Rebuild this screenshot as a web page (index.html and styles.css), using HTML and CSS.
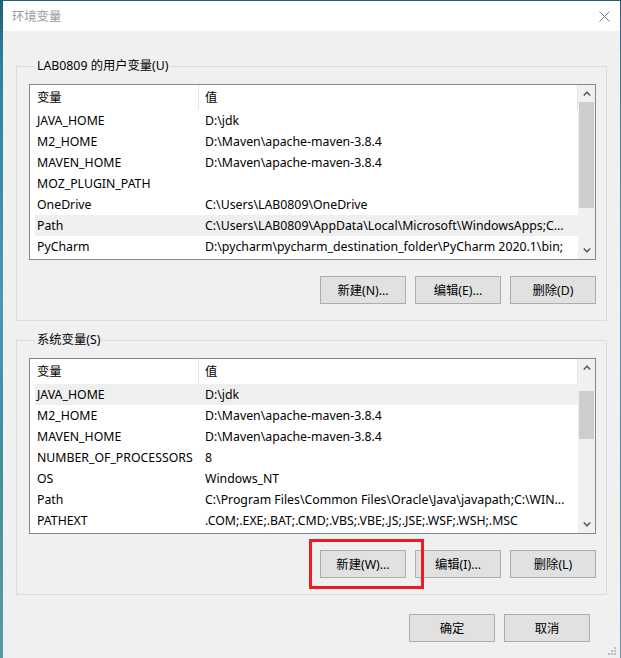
FILE: index.html
```html
<!DOCTYPE html>
<html lang="zh-CN">
<head>
  <meta charset="UTF-8">
  <title>环境变量</title>
  <link rel="stylesheet" href="styles.css">
</head>
<body>
  <div class="window">
    <div class="titlebar">
      <span class="title">环境变量</span>
      <svg class="close" width="11" height="11" viewBox="0 0 11 11">
        <path d="M0.5 0.5 L10.5 10.5 M10.5 0.5 L0.5 10.5" stroke="#7a7a7a" stroke-width="1" fill="none"/>
      </svg>
    </div>

    <div class="content">
      <fieldset class="group">
        <legend>LAB0809 的用户变量(U)</legend>
        <div class="listview">
          <div class="list-main">
            <div class="list-header">
              <div class="hcell name">变量</div>
              <div class="hcell value">值</div>
            </div>
            <div class="row"><span class="c1">JAVA_HOME</span><span class="c2">D:\jdk</span></div>
            <div class="row"><span class="c1">M2_HOME</span><span class="c2">D:\Maven\apache-maven-3.8.4</span></div>
            <div class="row"><span class="c1">MAVEN_HOME</span><span class="c2">D:\Maven\apache-maven-3.8.4</span></div>
            <div class="row"><span class="c1">MOZ_PLUGIN_PATH</span><span class="c2"></span></div>
            <div class="row"><span class="c1">OneDrive</span><span class="c2">C:\Users\LAB0809\OneDrive</span></div>
            <div class="row selected"><span class="c1">Path</span><span class="c2">C:\Users\LAB0809\AppData\Local\Microsoft\WindowsApps;C...</span></div>
            <div class="row"><span class="c1">PyCharm</span><span class="c2">D:\pycharm\pycharm_destination_folder\PyCharm 2020.1\bin;</span></div>
          </div>
          <div class="scrollbar">
            <div class="arrow"><svg width="8" height="5" viewBox="0 0 8 5"><path d="M0.8 4.5 L4 1.2 L7.2 4.5" stroke="#606060" stroke-width="1.6" fill="none"/></svg></div>
            <div class="track"><div class="thumb thumb-user"></div></div>
            <div class="arrow"><svg width="8" height="5" viewBox="0 0 8 5"><path d="M0.8 0.5 L4 3.8 L7.2 0.5" stroke="#606060" stroke-width="1.6" fill="none"/></svg></div>
          </div>
        </div>
        <div class="buttons">
          <button class="btn">新建(N)...</button>
          <button class="btn">编辑(E)...</button>
          <button class="btn">删除(D)</button>
        </div>
      </fieldset>

      <fieldset class="group system">
        <legend>系统变量(S)</legend>
        <div class="listview">
          <div class="list-main">
            <div class="list-header">
              <div class="hcell name">变量</div>
              <div class="hcell value">值</div>
            </div>
            <div class="row selected"><span class="c1">JAVA_HOME</span><span class="c2">D:\jdk</span></div>
            <div class="row"><span class="c1">M2_HOME</span><span class="c2">D:\Maven\apache-maven-3.8.4</span></div>
            <div class="row"><span class="c1">MAVEN_HOME</span><span class="c2">D:\Maven\apache-maven-3.8.4</span></div>
            <div class="row"><span class="c1">NUMBER_OF_PROCESSORS</span><span class="c2">8</span></div>
            <div class="row"><span class="c1">OS</span><span class="c2">Windows_NT</span></div>
            <div class="row"><span class="c1">Path</span><span class="c2">C:\Program Files\Common Files\Oracle\Java\javapath;C:\WIN...</span></div>
            <div class="row"><span class="c1">PATHEXT</span><span class="c2">.COM;.EXE;.BAT;.CMD;.VBS;.VBE;.JS;.JSE;.WSF;.WSH;.MSC</span></div>
          </div>
          <div class="scrollbar">
            <div class="arrow"><svg width="8" height="5" viewBox="0 0 8 5"><path d="M0.8 4.5 L4 1.2 L7.2 4.5" stroke="#606060" stroke-width="1.6" fill="none"/></svg></div>
            <div class="track"><div class="thumb thumb-system"></div></div>
            <div class="arrow"><svg width="8" height="5" viewBox="0 0 8 5"><path d="M0.8 0.5 L4 3.8 L7.2 0.5" stroke="#606060" stroke-width="1.6" fill="none"/></svg></div>
          </div>
        </div>
        <div class="buttons">
          <div class="marked">
            <button class="btn">新建(W)...</button>
            <div class="highlight-box"></div>
          </div>
          <button class="btn">编辑(I)...</button>
          <button class="btn">删除(L)</button>
        </div>
      </fieldset>

      <div class="dialog-buttons">
        <button class="btn">确定</button>
        <button class="btn">取消</button>
      </div>
    </div>

    <svg class="grip" width="10" height="10" viewBox="0 0 10 10">
      <rect x="7" y="1" width="2" height="2" fill="#bdbdbd"/>
      <rect x="4" y="4" width="2" height="2" fill="#bdbdbd"/>
      <rect x="7" y="4" width="2" height="2" fill="#bdbdbd"/>
      <rect x="1" y="7" width="2" height="2" fill="#bdbdbd"/>
      <rect x="4" y="7" width="2" height="2" fill="#bdbdbd"/>
      <rect x="7" y="7" width="2" height="2" fill="#bdbdbd"/>
    </svg>
  </div>
</body>
</html>
```

FILE: styles.css
```css
* { box-sizing: border-box; }

body {
  margin: 0;
  height: 658px;
  overflow: hidden;
  background: linear-gradient(to bottom, #1f5f78 0px, #2f7f9c 60px, #4b97b2 300px, #3f8da0 450px, #5a9aa6 658px);
  font-family: "Noto Sans", "Noto Sans CJK SC", sans-serif;
  font-size: 12.3px;
  color: #000;
}

.window {
  position: relative;
  margin: 1px 0 0 3px;
  width: 617px;
  height: 657px;
  background: #f0f0f0;
  display: flex;
  flex-direction: column;
}

.titlebar {
  height: 30px;
  background: #fff;
  display: flex;
  align-items: center;
  justify-content: space-between;
  padding: 0 10px 0 9px;
}
.title {
  color: #9a9a9a;
}

.content {
  padding: 27px 13px 0 13px;
}

.group {
  margin: 0;
  padding: 0 10px 16px 12px;
  border: 1px solid #dcdcdc;
}
.group.system {
  margin-top: 11px;
}
.group legend {
  margin-left: 6px;
  padding: 0 2px;
  line-height: 16px;
}

.listview {
  margin-top: 10px;
  height: 176px;
  border: 1px solid #828790;
  background: #fff;
  display: flex;
}
.list-main {
  flex: 1;
  min-width: 0;
}
.list-header {
  height: 25px;
  display: flex;
  border-right: 1px solid #e5e5e5;
}
.hcell {
  line-height: 25px;
  white-space: nowrap;
}
.hcell.name {
  width: 169px;
  padding-left: 7px;
  border-right: 1px solid #e5e5e5;
}
.hcell.value {
  padding-left: 6px;
}

.row {
  margin-left: 5px;
  height: 21px;
  line-height: 21px;
  display: flex;
  white-space: nowrap;
  overflow: hidden;
}
.row.selected {
  background: #efefef;
}
.c1 {
  width: 168px;
  flex: none;
  padding-left: 2px;
  overflow: hidden;
}
.c2 {
  padding-left: 2px;
  overflow: hidden;
}

.scrollbar {
  width: 17px;
  flex: none;
  background: #f0f0f0;
  display: flex;
  flex-direction: column;
}
.arrow {
  height: 17px;
  display: flex;
  align-items: center;
  justify-content: center;
}
.track {
  flex: 1;
  padding: 0 1px;
}
.thumb {
  background: #cdcdcd;
}
.thumb-user {
  height: 106px;
}
.thumb-system {
  margin-top: 15px;
  height: 48px;
}

.buttons {
  margin-top: 16px;
  display: flex;
  justify-content: flex-end;
  gap: 9px;
}
.btn {
  width: 86px;
  height: 28px;
  margin: 0;
  padding: 0;
  background: #e1e1e1;
  border: 1px solid #adadad;
  font-family: "Noto Sans", "Noto Sans CJK SC", sans-serif;
  font-size: 12.3px;
  color: #000;
}

.marked {
  position: relative;
}
.highlight-box {
  position: absolute;
  left: -11px;
  top: -11px;
  width: 115px;
  height: 50px;
  border: 3px solid #ed1c24;
}

.dialog-buttons {
  margin: 19px 17px 0 0;
  display: flex;
  justify-content: flex-end;
  gap: 9px;
}

.grip {
  position: absolute;
  right: 3px;
  bottom: 2px;
}
```
